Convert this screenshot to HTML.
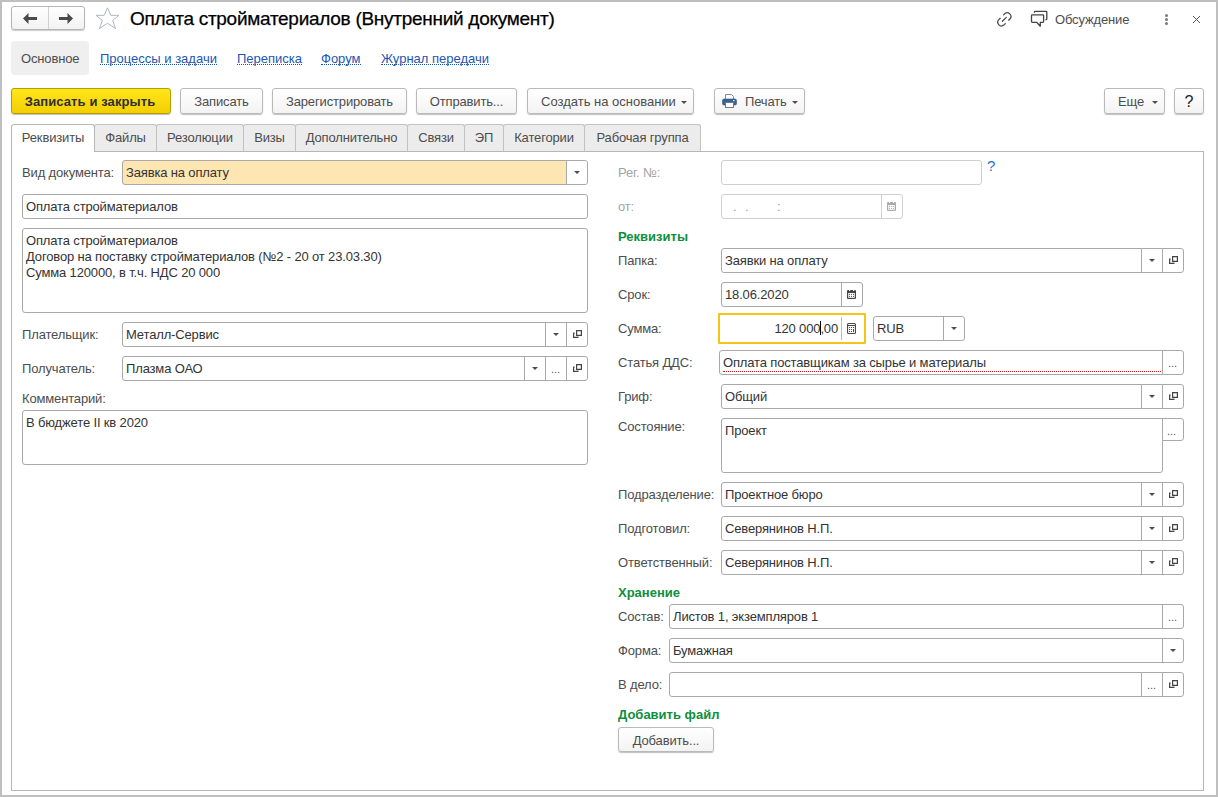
<!DOCTYPE html>
<html><head><meta charset="utf-8">
<style>
*{box-sizing:border-box;margin:0;padding:0}
html,body{width:1218px;height:797px;overflow:hidden;background:#fff}
body{font-family:"Liberation Sans",sans-serif;font-size:13px;color:#4d4d4d;position:relative;letter-spacing:-0.15px}
.a{position:absolute;white-space:nowrap}
#frame{position:absolute;left:0;top:0;width:1218px;height:797px;border:2px solid #bfbfbf}
.lbl{position:absolute;line-height:25px;height:25px;color:#4d4d4d;white-space:nowrap}
.f{position:absolute;height:25px;border:1px solid #a9a9a9;border-radius:3px;background:#fff;color:#333;line-height:23px;padding-left:3px;white-space:nowrap;overflow:hidden}
.seg{position:absolute;top:0;width:21px;height:23px;border-left:1px solid #a9a9a9}
.dd:after{content:"";position:absolute;left:7px;top:10px;border-left:3px solid transparent;border-right:3px solid transparent;border-top:3px solid #4d4d4d}
.el:after{content:"...";position:absolute;left:5px;top:1px;font-size:11px;color:#555;letter-spacing:0}
.op svg{position:absolute;left:4px;top:6px}
.cal svg{position:absolute;left:5px;top:6px}
.ta{position:absolute;border:1px solid #a9a9a9;border-radius:3px;background:#fff;color:#333;line-height:16px;padding:4px 0 0 3px;white-space:nowrap}
.btn{position:absolute;height:26px;border:1px solid #b9b9b9;border-radius:3px;background:linear-gradient(#fff,#f3f3f3);box-shadow:0 1px 1px rgba(0,0,0,.25);color:#4d4d4d;text-align:center;line-height:24px;padding-top:1px;white-space:nowrap}
.tab{position:absolute;top:124px;height:27px;border:1px solid #c2c2c2;border-bottom:none;border-radius:3px 3px 0 0;background:#ececec;color:#4d4d4d;text-align:center;line-height:26px;white-space:nowrap}
.lnk{position:absolute;top:50px;color:#1a57b5;line-height:17px;white-space:nowrap;border-bottom:1px dotted #1a57b5;height:15px;letter-spacing:0}
.hdr{position:absolute;font-weight:bold;letter-spacing:0;color:#0e8f3c;white-space:nowrap;line-height:18px}
</style></head><body>
<svg width="0" height="0" style="position:absolute"><defs>
<symbol id="op" viewBox="0 0 12 12"><path d="M5.6 1.6 H10.4 V6.4 H5.6 Z" fill="none" stroke="#444" stroke-width="1.2"/><path d="M3.6 4.1 H2.6 V8.4 H6.9 V7.4" fill="none" stroke="#444" stroke-width="1.2"/></symbol>
<symbol id="cal" viewBox="0 0 9 10"><rect x="0" y="1" width="9" height="9" rx="1" fill="#444"/><rect x="1.2" y="4" width="6.6" height="4.8" fill="#fff"/><circle cx="2.5" cy="5.3" r=".6" fill="#444"/><circle cx="4.5" cy="5.3" r=".6" fill="#444"/><circle cx="6.5" cy="5.3" r=".6" fill="#444"/><circle cx="2.5" cy="7.3" r=".6" fill="#444"/><circle cx="4.5" cy="7.3" r=".6" fill="#444"/><circle cx="6.5" cy="7.3" r=".6" fill="#444"/><rect x="2" y="0" width="1.2" height="2" fill="#fff"/><rect x="6" y="0" width="1.2" height="2" fill="#fff"/></symbol>
</defs></svg>
<div id="frame"></div>

<!-- header -->
<div class="a" style="left:11px;top:6px;width:74px;height:24px;border:1px solid #b5b5b5;border-radius:3px;background:linear-gradient(#fff,#f2f2f2);box-shadow:0 1px 1px rgba(0,0,0,.2)"></div>
<div class="a" style="left:48px;top:7px;width:1px;height:22px;background:#d0d0d0"></div>
<svg class="a" style="left:23px;top:13px" width="14" height="11" viewBox="0 0 14 11"><path d="M0 5.5 L5.5 0 V4 H14 V7 H5.5 V11 Z" fill="#4a4a4a"/></svg>
<svg class="a" style="left:59px;top:13px" width="14" height="11" viewBox="0 0 14 11"><path d="M14 5.5 L8.5 0 V4 H0 V7 H8.5 V11 Z" fill="#4a4a4a"/></svg>
<svg class="a" style="left:95px;top:7px" width="25" height="23" viewBox="0 0 25 23"><path d="M12.5 0.8 L15.7 8.3 L23.9 8.3 L17.7 13.5 L20.5 21.5 L12.5 16.3 L4.5 21.5 L7.3 13.5 L1 8.3 L9.3 8.3 Z" fill="none" stroke="#aeb6bf" stroke-width="1" stroke-linejoin="miter"/></svg>
<div class="a" style="left:130px;top:7px;font-size:19px;color:#000;line-height:24px;letter-spacing:-0.28px;-webkit-text-stroke:0.25px #000">Оплата стройматериалов (Внутренний документ)</div>

<svg class="a" style="left:990px;top:5px" width="60" height="25" viewBox="0 0 60 25"><g fill="none" stroke="#4a4a4a" stroke-width="1.25" stroke-linecap="round"><path d="M13.7 9.8 L14.9 8.6 A3.7 3.7 0 0 1 20.1 13.8 L18.7 15.2"/><path d="M10.2 13.3 L8.6 14.9 A3.7 3.7 0 0 0 13.8 20.1 L15.3 18.6"/><path d="M12.4 16.3 L16.3 12.4"/></g><g fill="none" stroke="#444" stroke-width="1.3" stroke-linejoin="round"><path d="M42.2 9.9 H52.9 Q53.6 9.9 53.6 10.6 V16.6 Q53.6 17.3 52.9 17.3 H50.3 V21.2 L46.6 17.3 H42.2 Q41.5 17.3 41.5 16.6 V10.6 Q41.5 9.9 42.2 9.9 Z"/><path d="M44.4 7.8 V7.1 Q44.4 6.4 45.1 6.4 H56.1 Q56.8 6.4 56.8 7.1 V14 Q56.8 14.6 56.1 14.6 H55.4"/></g></svg>
<div class="a" style="left:1055px;top:12px;color:#4d4d4d;line-height:16px">Обсуждение</div>
<div class="a" style="left:1165px;top:14px;width:3px;height:3px;border-radius:2px;background:#7a7a7a"></div>
<div class="a" style="left:1165px;top:18px;width:3px;height:3px;border-radius:2px;background:#7a7a7a"></div>
<div class="a" style="left:1165px;top:22px;width:3px;height:3px;border-radius:2px;background:#7a7a7a"></div>
<svg class="a" style="left:1192px;top:15px" width="9" height="9" viewBox="0 0 9 9"><path d="M1 1 L8 8 M8 1 L1 8" stroke="#555" stroke-width="1"/></svg>

<!-- link tabs -->
<div class="a" style="left:11px;top:41px;width:78px;height:34px;background:#efefef;border-radius:4px"></div>
<div class="a" style="left:21px;top:50px;line-height:18px;color:#4d4d4d">Основное</div>
<div class="lnk" style="left:100px">Процессы и задачи</div>
<div class="lnk" style="left:237px">Переписка</div>
<div class="lnk" style="left:321px">Форум</div>
<div class="lnk" style="left:381px">Журнал передачи</div>

<!-- buttons -->
<div class="btn" style="left:11px;top:88px;width:160px;background:linear-gradient(#ffe51c,#f3cf00);border-color:#b59c00;color:#2f2f3a;font-weight:bold;letter-spacing:0.1px;padding-right:2px">Записать и закрыть</div>
<div class="btn" style="left:180px;top:88px;width:83px">Записать</div>
<div class="btn" style="left:272px;top:88px;width:135px">Зарегистрировать</div>
<div class="btn" style="left:416px;top:88px;width:101px">Отправить...</div>
<div class="btn" style="left:527px;top:88px;width:167px;text-align:left;padding-left:13px;letter-spacing:0">Создать на основании<span style="position:absolute;left:153px;top:12px;border-left:3px solid transparent;border-right:3px solid transparent;border-top:3px solid #4d4d4d"></span></div>
<div class="btn" style="left:714px;top:88px;width:91px;text-align:left;padding-left:30px">Печать<span style="position:absolute;left:77px;top:12px;border-left:3px solid transparent;border-right:3px solid transparent;border-top:3px solid #4d4d4d"></span>
<svg style="position:absolute;left:7px;top:5px" width="15" height="14" viewBox="0 0 15 14"><path d="M3.5 0.5 H9.5 L11.5 2.5 V6 H3.5 Z" fill="#fff" stroke="#888" stroke-width="1"/><rect x="0.5" y="5" width="14" height="6" rx="1.5" fill="#36649a" stroke="#2b5485" stroke-width=".6"/><rect x="3.5" y="8.5" width="8" height="5" fill="#fff" stroke="#777" stroke-width="1"/><rect x="11" y="6" width="1.5" height="1.2" fill="#fff"/></svg></div>
<div class="btn" style="left:1104px;top:88px;width:61px;text-align:left;padding-left:13px">Еще<span style="position:absolute;left:47px;top:12px;border-left:3px solid transparent;border-right:3px solid transparent;border-top:3px solid #4d4d4d"></span></div>
<div class="btn" style="left:1174px;top:88px;width:30px;color:#222;font-size:16px;letter-spacing:0">?</div>

<!-- tabs -->
<div class="a" style="left:11px;top:151px;width:1193px;height:640px;border:1px solid #b7b7b7;border-top-color:#b7b7b7"></div>
<div class="tab" style="left:94px;width:63px">Файлы</div>
<div class="tab" style="left:156px;width:88px">Резолюции</div>
<div class="tab" style="left:243px;width:53px">Визы</div>
<div class="tab" style="left:295px;width:113px">Дополнительно</div>
<div class="tab" style="left:407px;width:58px">Связи</div>
<div class="tab" style="left:464px;width:40px">ЭП</div>
<div class="tab" style="left:503px;width:82px">Категории</div>
<div class="tab" style="left:584px;width:117px">Рабочая группа</div>
<div class="tab" style="left:11px;width:84px;height:28px;background:#fff;border-color:#b7b7b7">Реквизиты</div>

<!-- left column -->
<div class="lbl" style="left:22px;top:160px">Вид документа:</div>
<div class="f" style="left:122px;top:160px;width:466px;background:#fde6b1">Заявка на оплату<div class="seg dd" style="left:443px;background:#fff"></div></div>
<div class="f" style="left:22px;top:194px;width:566px">Оплата стройматериалов</div>
<div class="ta" style="left:22px;top:228px;width:566px;height:85px">Оплата стройматериалов<br>Договор на поставку стройматериалов (№2 - 20 от 23.03.30)<br>Сумма 120000, в т.ч. НДС 20 000</div>

<div class="lbl" style="left:22px;top:322px">Плательщик:</div>
<div class="f" style="left:122px;top:322px;width:466px">Металл-Сервис<div class="seg dd" style="left:422px"></div><div class="seg op" style="left:443px"><svg width="12" height="12"><use href="#op"/></svg></div></div>
<div class="lbl" style="left:22px;top:356px">Получатель:</div>
<div class="f" style="left:122px;top:356px;width:466px">Плазма ОАО<div class="seg dd" style="left:401px"></div><div class="seg el" style="left:422px"></div><div class="seg op" style="left:443px"><svg width="12" height="12"><use href="#op"/></svg></div></div>
<div class="a" style="left:22px;top:391px;line-height:16px">Комментарий:</div>
<div class="ta" style="left:22px;top:410px;width:566px;height:55px">В бюджете II кв 2020</div>

<!-- right column -->
<div class="lbl" style="left:618px;top:160px;color:#a3a3a3">Рег. №:</div>
<div class="f" style="left:721px;top:160px;width:261px;border-color:#cfcfcf"></div>
<div class="a" style="left:987px;top:157px;color:#1f74c4;font-size:15px;line-height:18px;letter-spacing:0">?</div>
<div class="lbl" style="left:618px;top:194px;color:#a3a3a3">от:</div>
<div class="f" style="left:721px;top:194px;width:182px;border-color:#cfcfcf;color:#999"><span class="a" style="left:11px">.</span><span class="a" style="left:23px">.</span><span class="a" style="left:55px">:</span><div class="seg cal" style="left:159px;border-color:#cfcfcf"><svg width="9" height="10" style="opacity:.45"><use href="#cal"/></svg></div></div>
<div class="hdr" style="left:618px;top:228px">Реквизиты</div>
<div class="lbl" style="left:618px;top:248px">Папка:</div>
<div class="f" style="left:721px;top:248px;width:463px">Заявки на оплату<div class="seg dd" style="left:419px"></div><div class="seg op" style="left:440px"><svg width="12" height="12"><use href="#op"/></svg></div></div>
<div class="lbl" style="left:618px;top:282px">Срок:</div>
<div class="f" style="left:721px;top:282px;width:142px">18.06.2020<div class="seg cal" style="left:119px"><svg width="9" height="10"><use href="#cal"/></svg></div></div>
<div class="lbl" style="left:618px;top:316px">Сумма:</div>
<div class="f" style="left:718px;top:313px;width:148px;height:31px;border:2px solid #f6c514;border-radius:1px;text-align:right;padding-right:26px;line-height:27px">120 000<span style="display:inline-block;width:1px;height:14px;background:#000;vertical-align:-2px;margin-right:-1px"></span>,00<div class="seg" style="left:121px;top:2px;height:23px;border-color:#bbb"><svg style="position:absolute;left:5px;top:6px" width="9" height="11" viewBox="0 0 9 11"><rect x="0.55" y="0.55" width="7.9" height="9.9" rx="1" fill="#fff" stroke="#4a4a4a" stroke-width="1.1"/><g fill="#4a4a4a" shape-rendering="crispEdges"><rect x="1" y="2" width="7" height="1"/><rect x="2" y="4" width="1" height="1"/><rect x="4" y="4" width="1" height="1"/><rect x="6" y="4" width="1" height="1"/><rect x="2" y="6" width="1" height="1"/><rect x="4" y="6" width="1" height="1"/><rect x="2" y="8" width="1" height="1"/><rect x="4" y="8" width="1" height="1"/><rect x="6" y="6" width="1" height="3"/></g></svg></div></div>
<div class="f" style="left:873px;top:316px;width:92px">RUB<div class="seg dd" style="left:69px"></div></div>
<div class="lbl" style="left:618px;top:350px">Статья ДДС:</div>
<div class="f" style="left:719px;top:350px;width:465px">Оплата поставщикам за сырье и материалы<div class="seg el" style="left:442px"></div><div class="a" style="left:3px;top:20px;width:438px;border-bottom:1px dotted #e81010"></div></div>
<div class="lbl" style="left:618px;top:384px">Гриф:</div>
<div class="f" style="left:721px;top:384px;width:463px">Общий<div class="seg dd" style="left:419px"></div><div class="seg op" style="left:440px"><svg width="12" height="12"><use href="#op"/></svg></div></div>
<div class="a" style="left:618px;top:419px;line-height:16px">Состояние:</div>
<div class="ta" style="left:721px;top:418px;width:442px;height:55px;border-top-right-radius:0">Проект</div>
<div class="f" style="left:1162px;top:418px;width:22px;height:23px;border-radius:0 3px 3px 0"><div class="seg el" style="left:-1px;top:0;height:21px;border-left:none"></div></div>
<div class="lbl" style="left:618px;top:482px">Подразделение:</div>
<div class="f" style="left:721px;top:482px;width:463px">Проектное бюро<div class="seg dd" style="left:419px"></div><div class="seg op" style="left:440px"><svg width="12" height="12"><use href="#op"/></svg></div></div>
<div class="lbl" style="left:618px;top:516px">Подготовил:</div>
<div class="f" style="left:721px;top:516px;width:463px">Северянинов Н.П.<div class="seg dd" style="left:419px"></div><div class="seg op" style="left:440px"><svg width="12" height="12"><use href="#op"/></svg></div></div>
<div class="lbl" style="left:618px;top:550px">Ответственный:</div>
<div class="f" style="left:721px;top:550px;width:463px">Северянинов Н.П.<div class="seg dd" style="left:419px"></div><div class="seg op" style="left:440px"><svg width="12" height="12"><use href="#op"/></svg></div></div>
<div class="hdr" style="left:618px;top:584px">Хранение</div>
<div class="lbl" style="left:618px;top:604px">Состав:</div>
<div class="f" style="left:669px;top:604px;width:515px">Листов 1, экземпляров 1<div class="seg el" style="left:492px"></div></div>
<div class="lbl" style="left:618px;top:638px">Форма:</div>
<div class="f" style="left:669px;top:638px;width:515px">Бумажная<div class="seg dd" style="left:492px"></div></div>
<div class="lbl" style="left:618px;top:672px">В дело:</div>
<div class="f" style="left:669px;top:672px;width:515px"><div class="seg el" style="left:471px"></div><div class="seg op" style="left:492px"><svg width="12" height="12"><use href="#op"/></svg></div></div>
<div class="hdr" style="left:618px;top:706px">Добавить файл</div>
<div class="btn" style="left:618px;top:727px;width:96px;height:25px;line-height:23px">Добавить...</div>
</body></html>
